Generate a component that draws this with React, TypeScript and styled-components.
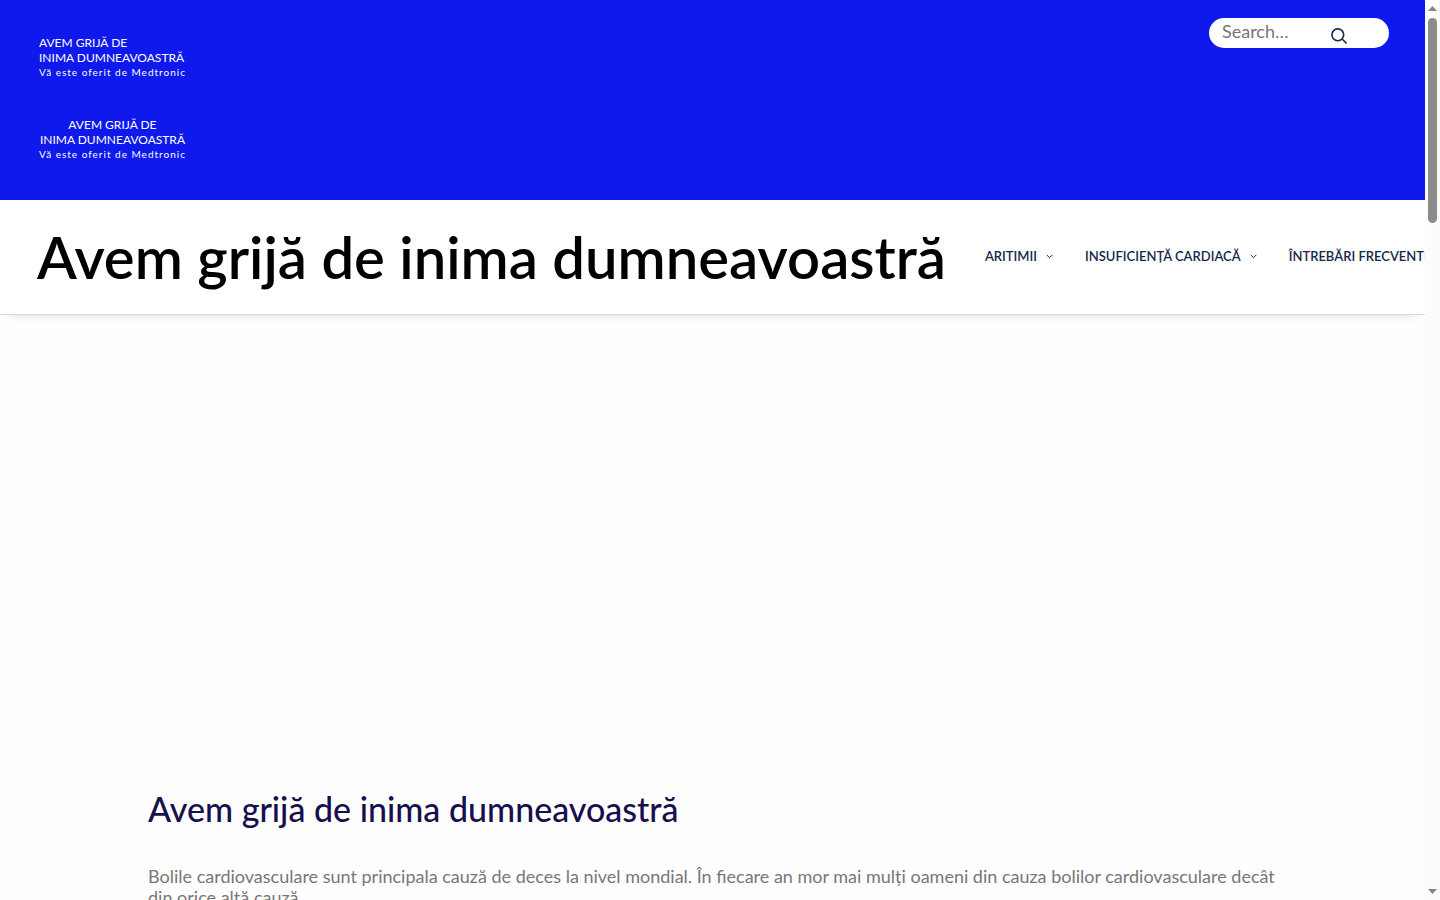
import React from "react";
import styled, { createGlobalStyle } from "styled-components";

const GlobalStyle = createGlobalStyle`
  *, *::before, *::after { box-sizing: border-box; }
  body {
    margin: 0;
    background: #fefefe;
    font-family: Lato, "Liberation Sans", sans-serif;
    overflow: hidden;
  }
`;

const Shell = styled.div`
  display: flex;
  height: 100vh;
  overflow: hidden;
`;

const Page = styled.div`
  flex: 1;
  min-width: 0;
  overflow: hidden;
`;

const TopBar = styled.header`
  display: flex;
  justify-content: space-between;
  align-items: flex-start;
  height: 200px;
  padding: 18px 36px 0 39px;
  background: #0f19ec;
`;

const Logos = styled.div`
  display: flex;
  flex-direction: column;
  gap: 37px;
  padding-top: 17px;
`;

const LogoLink = styled.a<{ $centered?: boolean }>`
  display: block;
  color: #fff;
  font-size: 12px;
  line-height: 15px;
  text-align: ${(p) => (p.$centered ? "center" : "left")};
  text-decoration: none;
  white-space: nowrap;
`;

const LogoLine = styled.span`
  display: block;
`;

const LogoTagline = styled.span`
  display: block;
  font-size: 10px;
  line-height: 15px;
  letter-spacing: 1px;
  text-align: left;
`;

const SearchForm = styled.form`
  display: flex;
  align-items: center;
  width: 180px;
  height: 30px;
  padding: 0 41px 0 13px;
  border-radius: 15px;
  background: #fff;
`;

const SearchInput = styled.input`
  flex: 1;
  min-width: 0;
  height: 28px;
  padding: 0 0 4px;
  border: 0;
  outline: 0;
  background: transparent;
  color: #333;
  font: 400 18px/24px Lato, sans-serif;
  &::placeholder { color: #777; opacity: 1; }
`;

const SearchButton = styled.button`
  display: flex;
  align-items: flex-end;
  height: 30px;
  padding: 0 0 3px;
  border: 0;
  background: transparent;
  color: #14284b;
`;

const NavBar = styled.div`
  display: flex;
  align-items: center;
  height: 115px;
  padding: 0 37px;
  background: #fff;
  border-bottom: 1px solid #d9d9d9;
  box-shadow: 0 8px 8px -8px rgba(0, 0, 0, 0.15);
`;

const SiteTitle = styled.a`
  flex: none;
  margin-right: 39px;
  color: #000;
  font-size: 58px;
  font-weight: 600;
  line-height: 72px;
  text-decoration: none;
  white-space: nowrap;
`;

const Menu = styled.nav`
  display: flex;
  flex: none;
  gap: 32px;
  padding-bottom: 2px;
`;

const MenuLink = styled.a`
  display: flex;
  align-items: center;
  gap: 9px;
  color: #14284b;
  font-size: 13px;
  line-height: 20px;
  font-weight: 600;
  text-decoration: none;
  white-space: nowrap;
`;

const Hero = styled.div`
  height: 474px;
`;

const Content = styled.main`
  padding: 0 148px;
`;

const Heading = styled.h1`
  margin: 0 0 37px;
  color: #170f4e;
  font-size: 34px;
  line-height: 40px;
  font-weight: 500;
`;

const Paragraph = styled.p`
  margin: 0;
  color: #777;
  font-size: 18px;
  line-height: 21px;
`;

const ScrollTrack = styled.div`
  display: flex;
  flex: none;
  flex-direction: column;
  align-items: center;
  justify-content: space-between;
  width: 15px;
  padding: 6px 0;
  background: #fcfcfc;
`;

const ScrollTop = styled.div`
  display: flex;
  flex-direction: column;
  align-items: center;
  gap: 7px;
`;

const ScrollThumb = styled.div`
  width: 9px;
  height: 205px;
  border-radius: 5px;
  background: #8b8b8b;
`;

const Chevron = () => (
  <svg width="7" height="5" viewBox="0 0 7 5" fill="none" stroke="currentColor" aria-hidden="true">
    <path d="M0.6 0.8 3.5 3.7 6.4 0.8" />
  </svg>
);

const SearchIcon = () => (
  <svg width="18" height="18" viewBox="0 0 18 18" fill="none" stroke="currentColor" strokeWidth="1.6" aria-hidden="true">
    <circle cx="7.8" cy="7.8" r="5.9" />
    <path d="M12 12 16.6 16.4" />
  </svg>
);

const Arrow = ({ down = false }: { down?: boolean }) => (
  <svg width="9" height="5" viewBox="0 0 9 5" fill="#858585" aria-hidden="true">
    <path d={down ? "M0 0H9L4.5 5Z" : "M0 5H9L4.5 0Z"} />
  </svg>
);

const Logo = ({ centered }: { centered?: boolean }) => (
  <LogoLink href="#" $centered={centered}>
    <LogoLine>AVEM GRIJĂ DE</LogoLine>
    <LogoLine>INIMA DUMNEAVOASTRĂ</LogoLine>
    <LogoTagline>Vă este oferit de Medtronic</LogoTagline>
  </LogoLink>
);

export default function App() {
  return (
    <Shell>
      <GlobalStyle />
      <Page>
        <TopBar>
          <Logos>
            <Logo />
            <Logo centered />
          </Logos>
          <SearchForm role="search">
            <SearchInput type="text" placeholder="Search…" aria-label="Search" />
            <SearchButton type="button" aria-label="Submit search">
              <SearchIcon />
            </SearchButton>
          </SearchForm>
        </TopBar>
        <NavBar>
          <SiteTitle href="#">Avem grijă de inima dumneavoastră</SiteTitle>
          <Menu>
            <MenuLink href="#">ARITIMII <Chevron /></MenuLink>
            <MenuLink href="#">INSUFICIENȚĂ CARDIACĂ <Chevron /></MenuLink>
            <MenuLink href="#">ÎNTREBĂRI FRECVENTE</MenuLink>
          </Menu>
        </NavBar>
        <Hero />
        <Content>
          <Heading>Avem grijă de inima dumneavoastră</Heading>
          <Paragraph>
            Bolile cardiovasculare sunt principala cauză de deces la nivel mondial. În fiecare an mor
            mai mulți oameni din cauza bolilor cardiovasculare decât din orice altă cauză.
          </Paragraph>
        </Content>
      </Page>
      <ScrollTrack aria-hidden="true">
        <ScrollTop>
          <Arrow />
          <ScrollThumb />
        </ScrollTop>
        <Arrow down />
      </ScrollTrack>
    </Shell>
  );
}
